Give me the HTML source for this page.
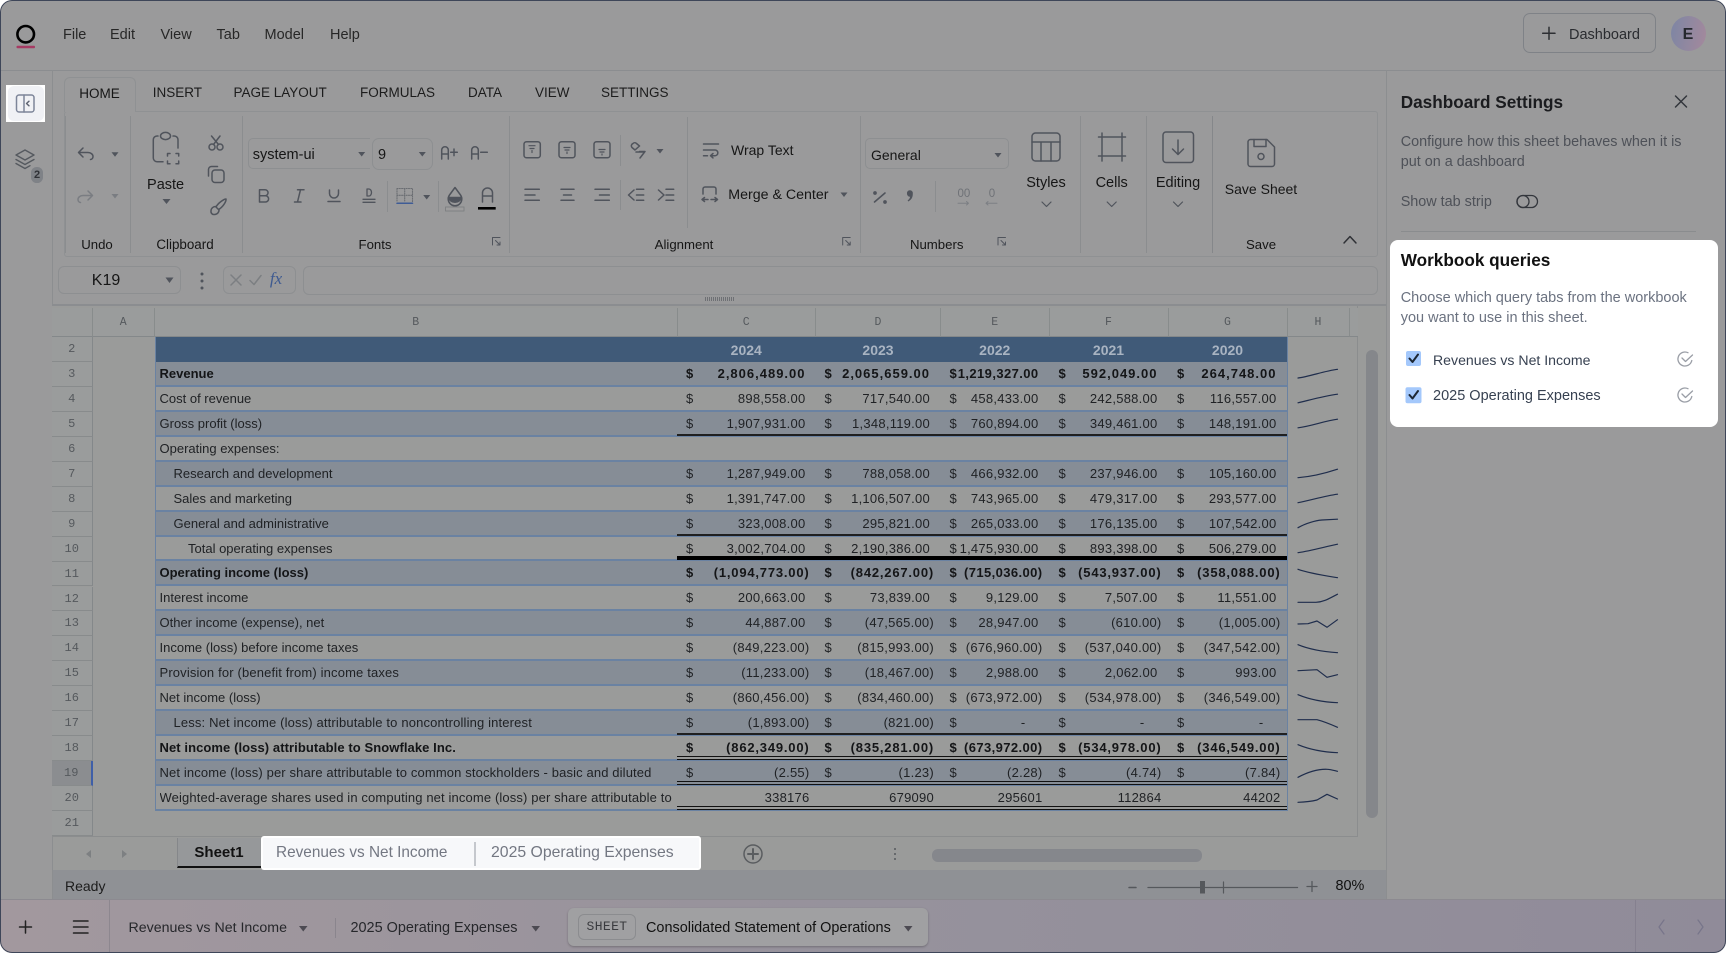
<!DOCTYPE html>
<html><head><meta charset="utf-8"><style>
*{box-sizing:border-box}
html,body{margin:0;padding:0;width:1726px;height:953px;overflow:hidden;background:#fff;font-family:"Liberation Sans",sans-serif}
.app{position:absolute;left:0;top:0;width:1726px;height:953px;border-radius:12px;overflow:hidden;background:#9a9a9b}
.frame{position:absolute;left:0;top:0;width:1726px;height:953px;border:1.5px solid #3e4659;border-radius:12px;pointer-events:none}
.b{position:absolute}
.t{position:absolute;white-space:nowrap;line-height:20px;margin-top:-10px;color:#161616;font-size:14px}
.c{transform:translateX(-50%)}
.tbl{position:absolute;left:155px;top:337px;width:1132.5px;border-left:1.5px solid #6a82a2;border-right:1.5px solid #6a82a2}
.r{position:relative;height:24.95px;border-bottom:2px solid #6a82a2;font-size:13px;color:#1f2124;line-height:24px;white-space:nowrap}
.r.e{background:#868d96}
.r.s{font-weight:bold;color:#141517}
.r i{letter-spacing:.25px}
.r.s i{letter-spacing:.8px}
.r.v i{letter-spacing:1px}
.r.h{background:#405a78;font-weight:bold;font-size:14px;color:#a9b4c2;border-bottom:0;line-height:27px}
.r.h i{letter-spacing:0}
.r span{position:absolute;left:3.5px;top:0;overflow:hidden;width:514px}
.r i{position:absolute;font-style:normal;top:0}
.r .a1{left:530px}.r .a2{left:668.5px}.r .a3{left:793.5px}.r .a4{left:902.5px}.r .a5{left:1021px}
.r .n1{right:481px}.r .n2{right:356.5px}.r .n3{right:248px}.r .n4{right:129px}.r .n5{right:10px}
.r .x{margin-right:-4px}.r .y{margin-right:13px}
.r u{position:absolute;left:521px;right:0;bottom:-1px;text-decoration:none}
.k1{height:2px;background:#202020;bottom:-1px}
.k2{height:4px;background:#000}
.k3{height:4px;border-top:1.5px solid #111;border-bottom:1.5px solid #111}
.rh{position:absolute;left:52px;width:40.5px;height:24.95px;border-bottom:1px solid #888b8c;border-right:1px solid #84888a;background:#9a9c9c;font:12px/25px "Liberation Mono",monospace;color:#55595d;text-align:center}
.ch{position:absolute;top:308px;height:29px;border-right:1px solid #888c8c;border-bottom:1px solid #84888a;background:#9a9c9c;font:11.5px/30px "Liberation Mono",monospace;color:#55595d;text-align:center}
.d{position:absolute;width:1px;background:#8b8d8f}
</style></head><body><div class="app">

<div class="b" style="left:0;top:70px;width:1726px;height:1px;background:#8b8d90"></div>
<div class="b" style="left:52px;top:70px;width:1px;height:830px;background:#8c8e90"></div>
<div class="b" style="left:1386px;top:70px;width:1px;height:830px;background:#8c8e90"></div>

<span class="t" style="left:63px;top:35px;font-size:14.5px;color:#272727">File</span>
<span class="t" style="left:110px;top:35px;font-size:14.5px;color:#272727">Edit</span>
<span class="t" style="left:160.5px;top:35px;font-size:14.5px;color:#272727">View</span>
<span class="t" style="left:216.5px;top:35px;font-size:14.5px;color:#272727">Tab</span>
<span class="t" style="left:264.5px;top:35px;font-size:14.5px;color:#272727">Model</span>
<span class="t" style="left:330px;top:35px;font-size:14.5px;color:#272727">Help</span>

<div class="b" style="left:1523px;top:13px;width:133px;height:40px;border:1px solid #7f8287;border-radius:7px"></div>
<span class="t" style="left:1569px;top:34.5px;font-size:14.5px;color:#2a2c30">Dashboard</span>
<div class="b" style="left:1670.5px;top:15.5px;width:35px;height:35px;border-radius:50%;background:linear-gradient(100deg,#7d86a4,#a4899c)"></div>
<span class="t c" style="left:1688px;top:34.5px;font-size:16px;font-weight:bold;color:#26282f">E</span>

<div class="b" style="left:6px;top:85px;width:39px;height:37px;background:#fff"></div>
<div class="b" style="left:7.5px;top:86px;width:36px;height:35px;background:#f0f1f5;border-radius:6px"></div>
<div class="b" style="left:31.3px;top:166.7px;width:11.4px;height:16px;background:#7f8287;border-radius:5.7px"></div>
<span class="t c" style="left:37px;top:174.5px;font-size:11px;font-weight:bold;color:#303237">2</span>

<div class="b" style="left:63.5px;top:111px;width:1314.5px;height:146px;border:1px solid #8f9193;border-radius:3px;background:#9a9a9b"></div>
<div class="b" style="left:63.5px;top:77px;width:72.5px;height:35px;background:#9a9a9b;border:1px solid #8f9193;border-bottom:0;border-radius:6px 6px 0 0"></div>
<div class="d" style="left:64.5px;top:116px;height:137px"></div>
<div class="d" style="left:130px;top:116px;height:137px"></div>
<div class="d" style="left:241.5px;top:116px;height:137px"></div>
<div class="d" style="left:509px;top:116px;height:137px"></div>
<div class="d" style="left:686.7px;top:117px;height:111px"></div>
<div class="d" style="left:859.5px;top:116px;height:137px"></div>
<div class="d" style="left:1079.5px;top:116px;height:137px"></div>
<div class="d" style="left:1145.6px;top:116px;height:137px"></div>
<div class="d" style="left:1211.5px;top:116px;height:137px;width:1.5px;background:#85878a"></div>
<div class="d" style="left:387.3px;top:181px;height:31px"></div>
<div class="d" style="left:438.3px;top:181px;height:31px"></div>
<div class="d" style="left:620.3px;top:135px;height:31px"></div>
<div class="d" style="left:620.3px;top:180px;height:30px"></div>
<div class="d" style="left:935px;top:181px;height:31px"></div>

<span class="t c" style="left:99.5px;top:94px;font-size:13.5px">HOME</span>
<span class="t" style="left:152.7px;top:93px;font-size:13.5px;color:#1c1c1c">INSERT</span>
<span class="t" style="left:233.5px;top:93px;font-size:13.5px;color:#1c1c1c">PAGE LAYOUT</span>
<span class="t" style="left:360px;top:93px;font-size:13.5px;color:#1c1c1c">FORMULAS</span>
<span class="t" style="left:468px;top:93px;font-size:13.5px;color:#1c1c1c">DATA</span>
<span class="t" style="left:535px;top:93px;font-size:13.5px;color:#1c1c1c">VIEW</span>
<span class="t" style="left:601px;top:93px;font-size:13.5px;color:#1c1c1c">SETTINGS</span>

<span class="t c" style="left:97px;top:245px;font-size:13.2px">Undo</span>
<span class="t c" style="left:185px;top:245px;font-size:13.4px">Clipboard</span>
<span class="t c" style="left:375px;top:245px;font-size:13.2px">Fonts</span>
<span class="t c" style="left:684px;top:245px;font-size:13.2px">Alignment</span>
<span class="t c" style="left:936.7px;top:245px;font-size:13.2px">Numbers</span>
<span class="t c" style="left:1261px;top:245px;font-size:13.2px">Save</span>

<span class="t c" style="left:165.6px;top:184.5px;font-size:14.5px">Paste</span>

<div class="b" style="left:248px;top:138px;width:122px;height:31px;border:1px solid #8d8f91;border-right:0;border-radius:5px 0 0 5px"></div>
<div class="b" style="left:371.5px;top:137.5px;width:61.5px;height:32px;border:1px solid #8d8f91;border-radius:7px"></div>
<span class="t" style="left:252.7px;top:155px;font-size:14.5px">system-ui</span>
<span class="t" style="left:378px;top:155px;font-size:14.5px">9</span>
<span class="t" style="left:731px;top:150px">Wrap Text</span>
<span class="t" style="left:728.3px;top:194.5px;font-size:14.2px">Merge &amp; Center</span>
<div class="b" style="left:865px;top:138px;width:144px;height:31px;border:1px solid #8d8f91;border-radius:5px"></div>
<span class="t" style="left:871px;top:155px">General</span>
<span class="t" style="left:957.5px;top:194px;font-size:11.5px;color:#6f7277">00</span>
<span class="t" style="left:988.7px;top:194px;font-size:11.5px;color:#6f7277">0</span>
<span class="t c" style="left:1046px;top:183px;font-size:14.5px">Styles</span>
<span class="t c" style="left:1111.7px;top:183px;font-size:14.5px">Cells</span>
<span class="t c" style="left:1178px;top:183px;font-size:14.5px">Editing</span>
<span class="t c" style="left:1261px;top:188.5px;font-size:14px">Save Sheet</span>

<div class="b" style="left:58px;top:266px;width:123px;height:28px;border:1px solid #8d8f91;border-radius:6px"></div>
<span class="t c" style="left:106px;top:281px;font-size:16px">K19</span>
<div class="b" style="left:223px;top:266px;width:73px;height:28px;border:1px solid #8d8f91;border-radius:6px"></div>
<span class="t c" style="left:276px;top:279px;font:italic 17px/20px 'Liberation Serif',serif;color:#3e5a90">fx</span>
<div class="b" style="left:303px;top:266px;width:1075px;height:29px;border:1px solid #8d8f91;border-radius:6px"></div>
<div class="b" style="left:52px;top:304px;width:1334px;height:2px;background:#8b8d90"></div>

<div class="b" style="left:52px;top:306px;width:1306px;height:531px;background:#9a9b9a;border-right:1px solid #8b8d8e;border-bottom:1px solid #8b8d8e"></div>
<div class="ch" style="left:52px;width:40.5px"></div>
<div class="ch" style="left:92.5px;width:62.5px">A</div>
<div class="ch" style="left:155px;width:522.5px">B</div>
<div class="ch" style="left:677.5px;width:138.5px">C</div>
<div class="ch" style="left:816px;width:125px">D</div>
<div class="ch" style="left:941px;width:108.5px">E</div>
<div class="ch" style="left:1049.5px;width:119px">F</div>
<div class="ch" style="left:1168.5px;width:119px">G</div>
<div class="ch" style="left:1287.5px;width:62px">H</div>
<div class="ch" style="left:1349.5px;width:8px;border-right:0"></div>

<div class="rh" style="top:337px">2</div>
<div class="rh" style="top:361.95px">3</div>
<div class="rh" style="top:386.9px">4</div>
<div class="rh" style="top:411.85px">5</div>
<div class="rh" style="top:436.8px">6</div>
<div class="rh" style="top:461.75px">7</div>
<div class="rh" style="top:486.7px">8</div>
<div class="rh" style="top:511.65px">9</div>
<div class="rh" style="top:536.6px">10</div>
<div class="rh" style="top:561.55px">11</div>
<div class="rh" style="top:586.5px">12</div>
<div class="rh" style="top:611.45px">13</div>
<div class="rh" style="top:636.4px">14</div>
<div class="rh" style="top:661.35px">15</div>
<div class="rh" style="top:686.3px">16</div>
<div class="rh" style="top:711.25px">17</div>
<div class="rh" style="top:736.2px">18</div>
<div class="rh" style="top:761.15px;background:#8b8d90;border-right:2px solid #3f5fa8">19</div>
<div class="rh" style="top:786.1px">20</div>
<div class="rh" style="top:811.05px">21</div>

<div class="tbl">
<div class="r h"><i style="left:521px;width:138.5px;text-align:center">2024</i><i style="left:659.5px;width:125px;text-align:center">2023</i><i style="left:784.5px;width:108.5px;text-align:center">2022</i><i style="left:893px;width:119px;text-align:center">2021</i><i style="left:1012px;width:119px;text-align:center">2020</i></div>
<div class="r e s v"><span>Revenue</span><i class="a1">$</i><i class="n1">2,806,489.00</i><i class="a2">$</i><i class="n2">2,065,659.00</i><i class="a3">$</i><i class="n3" style="letter-spacing:.4px">1,219,327.00</i><i class="a4">$</i><i class="n4">592,049.00</i><i class="a5">$</i><i class="n5">264,748.00</i></div>
<div class="r"><span>Cost of revenue</span><i class="a1">$</i><i class="n1">898,558.00</i><i class="a2">$</i><i class="n2">717,540.00</i><i class="a3">$</i><i class="n3">458,433.00</i><i class="a4">$</i><i class="n4">242,588.00</i><i class="a5">$</i><i class="n5">116,557.00</i></div>
<div class="r e"><span>Gross profit (loss)</span><i class="a1">$</i><i class="n1">1,907,931.00</i><i class="a2">$</i><i class="n2">1,348,119.00</i><i class="a3">$</i><i class="n3">760,894.00</i><i class="a4">$</i><i class="n4">349,461.00</i><i class="a5">$</i><i class="n5">148,191.00</i><u class="k1"></u></div>
<div class="r"><span>Operating expenses:</span></div>
<div class="r e"><span style="left:17.5px">Research and development</span><i class="a1">$</i><i class="n1">1,287,949.00</i><i class="a2">$</i><i class="n2">788,058.00</i><i class="a3">$</i><i class="n3">466,932.00</i><i class="a4">$</i><i class="n4">237,946.00</i><i class="a5">$</i><i class="n5">105,160.00</i></div>
<div class="r"><span style="left:17.5px">Sales and marketing</span><i class="a1">$</i><i class="n1">1,391,747.00</i><i class="a2">$</i><i class="n2">1,106,507.00</i><i class="a3">$</i><i class="n3">743,965.00</i><i class="a4">$</i><i class="n4">479,317.00</i><i class="a5">$</i><i class="n5">293,577.00</i></div>
<div class="r e"><span style="left:17.5px">General and administrative</span><i class="a1">$</i><i class="n1">323,008.00</i><i class="a2">$</i><i class="n2">295,821.00</i><i class="a3">$</i><i class="n3">265,033.00</i><i class="a4">$</i><i class="n4">176,135.00</i><i class="a5">$</i><i class="n5">107,542.00</i><u class="k1"></u></div>
<div class="r"><span style="left:32px">Total operating expenses</span><i class="a1">$</i><i class="n1">3,002,704.00</i><i class="a2">$</i><i class="n2">2,190,386.00</i><i class="a3">$</i><i class="n3">1,475,930.00</i><i class="a4">$</i><i class="n4">893,398.00</i><i class="a5">$</i><i class="n5">506,279.00</i><u class="k2"></u></div>
<div class="r e s"><span>Operating income (loss)</span><i class="a1">$</i><i class="n1 x">(1,094,773.00)</i><i class="a2">$</i><i class="n2 x">(842,267.00)</i><i class="a3">$</i><i class="n3 x" style="letter-spacing:.4px">(715,036.00)</i><i class="a4">$</i><i class="n4 x">(543,937.00)</i><i class="a5">$</i><i class="n5 x">(358,088.00)</i></div>
<div class="r"><span>Interest income</span><i class="a1">$</i><i class="n1">200,663.00</i><i class="a2">$</i><i class="n2">73,839.00</i><i class="a3">$</i><i class="n3">9,129.00</i><i class="a4">$</i><i class="n4">7,507.00</i><i class="a5">$</i><i class="n5">11,551.00</i></div>
<div class="r e"><span>Other income (expense), net</span><i class="a1">$</i><i class="n1">44,887.00</i><i class="a2">$</i><i class="n2 x">(47,565.00)</i><i class="a3">$</i><i class="n3">28,947.00</i><i class="a4">$</i><i class="n4 x">(610.00)</i><i class="a5">$</i><i class="n5 x">(1,005.00)</i></div>
<div class="r"><span>Income (loss) before income taxes</span><i class="a1">$</i><i class="n1 x">(849,223.00)</i><i class="a2">$</i><i class="n2 x">(815,993.00)</i><i class="a3">$</i><i class="n3 x">(676,960.00)</i><i class="a4">$</i><i class="n4 x">(537,040.00)</i><i class="a5">$</i><i class="n5 x">(347,542.00)</i></div>
<div class="r e"><span style="letter-spacing:.15px">Provision for (benefit from) income taxes</span><i class="a1">$</i><i class="n1 x">(11,233.00)</i><i class="a2">$</i><i class="n2 x">(18,467.00)</i><i class="a3">$</i><i class="n3">2,988.00</i><i class="a4">$</i><i class="n4">2,062.00</i><i class="a5">$</i><i class="n5">993.00</i></div>
<div class="r"><span>Net income (loss)</span><i class="a1">$</i><i class="n1 x">(860,456.00)</i><i class="a2">$</i><i class="n2 x">(834,460.00)</i><i class="a3">$</i><i class="n3 x">(673,972.00)</i><i class="a4">$</i><i class="n4 x">(534,978.00)</i><i class="a5">$</i><i class="n5 x">(346,549.00)</i></div>
<div class="r e"><span style="left:17.5px;letter-spacing:.15px">Less: Net income (loss) attributable to noncontrolling interest</span><i class="a1">$</i><i class="n1 x">(1,893.00)</i><i class="a2">$</i><i class="n2 x">(821.00)</i><i class="a3">$</i><i class="n3 y">-</i><i class="a4">$</i><i class="n4 y">-</i><i class="a5">$</i><i class="n5 y">-</i><u class="k1"></u></div>
<div class="r s"><span style="letter-spacing:.08px">Net income (loss) attributable to Snowflake Inc.</span><i class="a1">$</i><i class="n1 x">(862,349.00)</i><i class="a2">$</i><i class="n2 x">(835,281.00)</i><i class="a3">$</i><i class="n3 x" style="letter-spacing:.4px">(673,972.00)</i><i class="a4">$</i><i class="n4 x">(534,978.00)</i><i class="a5">$</i><i class="n5 x">(346,549.00)</i><u class="k3"></u></div>
<div class="r e"><span style="letter-spacing:.13px">Net income (loss) per share attributable to common stockholders - basic and diluted</span><i class="a1">$</i><i class="n1 x">(2.55)</i><i class="a2">$</i><i class="n2 x">(1.23)</i><i class="a3">$</i><i class="n3 x">(2.28)</i><i class="a4">$</i><i class="n4 x">(4.74)</i><i class="a5">$</i><i class="n5 x">(7.84)</i><u class="k3"></u></div>
<div class="r"><span style="letter-spacing:.13px">Weighted-average shares used in computing net income (loss) per share attributable to common stockholders</span><i class="n1 x">338176</i><i class="n2 x">679090</i><i class="n3 x">295601</i><i class="n4 x">112864</i><i class="n5 x">44202</i><u class="k3"></u></div>
</div>

<div class="b" style="left:53px;top:837px;width:1333px;height:33px;background:#9a9b9a"></div>
<div class="b" style="left:1358px;top:306px;width:28px;height:531px;background:#9a9b9a"></div>
<div class="b" style="left:1366px;top:350px;width:12px;height:468px;border-radius:6px;background:#85878b"></div>
<div class="b" style="left:177px;top:838px;width:84px;height:30px;background:#96989a;border-left:1px solid #85878a;border-bottom:2px solid #111"></div>
<span class="t c" style="left:219px;top:852.5px;font-size:15px;font-weight:bold;color:#111">Sheet1</span>
<div class="b" style="left:261px;top:836px;width:440px;height:34px;background:#fff;border-radius:3px"></div>
<div class="b" style="left:263px;top:838px;width:436px;height:30px;background:#f7f8fa"></div>
<div class="b" style="left:474px;top:842px;width:1.5px;height:24px;background:#c5c8cd"></div>
<span class="t" style="left:276px;top:852.5px;font-size:15.35px;color:#737782">Revenues vs Net Income</span>
<span class="t" style="left:491px;top:852.5px;font-size:15.8px;color:#737782">2025 Operating Expenses</span>
<div class="b" style="left:932px;top:849px;width:270px;height:12.5px;border-radius:6px;background:#85878c"></div>

<div class="b" style="left:53px;top:870px;width:1333px;height:29px;background:#8f9195"></div>
<span class="t" style="left:65px;top:886px;font-size:14px;color:#1c1c1c">Ready</span>
<span class="t" style="left:1335.5px;top:886px;font-size:14.4px;color:#111">80%</span>

<div class="b" style="left:0;top:899px;width:1726px;height:54px;background:linear-gradient(90deg,#a2989e,#96929c 50%,#908b99);border-top:1px solid #8c8a90"></div>
<div class="b" style="left:109px;top:900px;width:1px;height:53px;background:#8d878f"></div>
<span class="t" style="left:128.5px;top:928px;font-size:14.2px;color:#26272b">Revenues vs Net Income</span>
<span class="t" style="left:350.5px;top:928px;font-size:14.45px;color:#26272b">2025 Operating Expenses</span>
<div class="b" style="left:334.5px;top:918px;width:1px;height:20px;background:#8a858d"></div>
<div class="b" style="left:567.5px;top:908px;width:360px;height:38px;background:#a0a0a2;border-radius:6px;box-shadow:0 1px 2px rgba(0,0,0,.25)"></div>
<div class="b" style="left:578px;top:914px;width:58px;height:26px;border:1px solid #8b8c8f;border-radius:6px"></div>
<span class="t c" style="left:607px;top:927px;font:13px/20px 'Liberation Mono',monospace;letter-spacing:.4px;color:#3a3b3f">SHEET</span>
<span class="t" style="left:646px;top:928px;font-size:14.45px;color:#111">Consolidated Statement of Operations</span>
<div class="b" style="left:1635px;top:900px;width:1px;height:53px;background:#85808f"></div>

<span class="t" style="left:1400.7px;top:101.5px;font-size:17.2px;font-weight:bold;color:#1b1c1f">Dashboard Settings</span>
<span class="t" style="left:1400.7px;top:141.7px;font-size:14.4px;color:#4e5158">Configure how this sheet behaves when it is</span>
<span class="t" style="left:1400.7px;top:161.7px;font-size:14.4px;color:#4e5158">put on a dashboard</span>
<span class="t" style="left:1400.7px;top:202px;font-size:14.4px;color:#4e5158">Show tab strip</span>
<div class="b" style="left:1400.7px;top:231px;width:295px;height:1px;background:#8a8c8e"></div>

<div class="b" style="left:1390px;top:240px;width:328px;height:186.7px;background:#fff;border-radius:8px"></div>
<span class="t" style="left:1400.7px;top:260px;font-size:17.2px;font-weight:bold;color:#111">Workbook queries</span>
<span class="t" style="left:1400.7px;top:297.7px;font-size:14.5px;color:#6b7280">Choose which query tabs from the workbook</span>
<span class="t" style="left:1400.7px;top:317.7px;font-size:14.5px;color:#6b7280">you want to use in this sheet.</span>
<span class="t" style="left:1433px;top:360.3px;font-size:14.1px;color:#374151">Revenues vs Net Income</span>
<span class="t" style="left:1433px;top:396.3px;font-size:14.5px;color:#374151">2025 Operating Expenses</span>

<svg class="b" style="left:0;top:0" width="1726" height="953" viewBox="0 0 1726 953" fill="none" stroke-linecap="round" stroke-linejoin="round">
<ellipse cx="25.7" cy="34.2" rx="8.3" ry="8.2" stroke="#000" stroke-width="2.6"/>
<rect x="16.5" y="45.7" width="18.5" height="2.6" rx="1" fill="#a63a63"/>
<path d="M1542.7 33.3H1555M1549 27.3V39.3" stroke="#2d2f33" stroke-width="1.5"/>

<g stroke="#7d8599" stroke-width="1.5"><rect x="16.5" y="95" width="17.5" height="17" rx="2.5"/><path d="M24 95V112"/></g>
<path d="M29 101.2L26.5 103.5L29 105.8" stroke="#5e6372" stroke-width="1.4"/>
<g stroke="#55595f" stroke-width="1.4"><path d="M25 150L34 155L25 160L16 155Z"/><path d="M16 159.5L25 164.5L34 159.5"/><path d="M16 163.5L25 168.5L30 165.7"/></g>

<g stroke="#50545c" stroke-width="1.5">
<path d="M83 148L78.5 152.5L83 157M79 152.5H88C91 152.5 93 154.5 93 156.5C93 158 92 159.5 90.5 159.5"/>
<path d="M158 136H157a3.7 3.7 0 0 0-3.7 3.7V158a3.7 3.7 0 0 0 3.7 3.7H163M173 136h1.3a3.7 3.7 0 0 1 3.7 3.7V148"/>
<ellipse cx="165.5" cy="136" rx="5" ry="3.6"/>
<path d="M167.5 156V153.5H170M176 153.5H178.7V156M178.7 161V163.7H176M170 163.7H167.5V161"/>
<circle cx="212" cy="147" r="3"/><circle cx="220" cy="147" r="3"/>
<path d="M213.5 144.5L220 136M218.500 144.500L211.500 136"/>
<rect x="212" y="170" width="12" height="12.5" rx="3"/>
<path d="M208.500 176V169.500a3 3 0 0 1 3-3h6"/>
<path d="M226 199C224 199 218 203 216 207L218.500 209.500C222.500 207.500 226.500 201.500 226 199Z"/>
<path d="M216 206.500a4.500 4.500 0 0 0-5 4.500a3 3 0 0 0 3.500 3.500a4.500 4.500 0 0 0 4.500-5"/>
<path d="M441.700 159V150a3.300 3.300 0 0 1 6.600 0V159M441.700 154H448.300M450.700 152.300H457.300M454 149V155.600"/>
<path d="M471.700 159V150a3.300 3.300 0 0 1 6.600 0V159M471.700 154H478.300M480.700 152.300H487.300"/>
<path d="M259.500 189.700V202M259.500 189.700H265a3 3 0 0 1 0 6.100H259.500M259.500 195.800H265.500a3.100 3.100 0 0 1 0 6.200H259.500"/>
<path d="M297.500 189.700H304M294.500 202H301M300.500 189.700L297.500 202"/>
<path d="M329.500 190V193.500a4.500 4.500 0 0 0 9 0V190M328 201.500H340"/>
<path d="M367 189V196H369a2.500 3.500 0 0 0 0-7ZM363 199.300H375M363 202.300H375" stroke-width="1.300"/>
<path d="M397 188.500H412.500V202M397 188.500V202M404.700 188.500V202M397 195.300H412.500" stroke="#6a6d72" stroke-width="1.100" stroke-dasharray="1 1.300"/>
<path d="M397 203.200H412.500" stroke="#3f5c96"/>
<path d="M455 187.500L460.500 195a6.800 6.800 0 1 1-11 0Z"/>
<path d="M448.500 197.500H461.500a6.800 6.800 0 0 1-13 0Z" fill="#4f535c"/>
<rect x="445.500" y="207" width="18.500" height="4" fill="#9c9c9c" stroke="#7f8183" stroke-width="1"/>
<path d="M482.500 202V193a5 5 0 0 1 10 0V202M482.500 196H492.500"/>
<rect x="524" y="141.700" width="16.300" height="16" rx="2.500"/><rect x="559" y="141.700" width="16" height="16" rx="2.500"/><rect x="594" y="141.700" width="16" height="16" rx="2.500"/>
<path d="M529 145.700H535M530 148.500H534M532 150.500V152.500" stroke-width="1.200"/>
<path d="M564 147.500H570M565 150H569M567 152V153.500" stroke-width="1.200"/>
<path d="M599 149.500H605M600 152H604M602 154V155" stroke-width="1.200"/>
<path d="M633 143.500a2.500 2.500 0 0 1 3.500 0l3 2.500l-4.500 4l-3-2.500a2.500 2.500 0 0 1 1-4Z"/>
<path d="M636 152L644.500 152M640 158L645 151.500M639.500 151.500H645" />
<path d="M525 189.300H539.300M525 195H535M525 200.300H539.300M561 189.300H574M563.500 195H571.500M561 200.300H574M595 189.300H609.300M599.500 195H609.300M595 200.300H609.300"/>
<path d="M634 190L628.500 195L634 200M636.500 189.300H643.700M636.500 195H643.700M636.500 200.300H643.700M658.500 190L664 195L658.500 200M666 189.300H673.700M666 195H673.700M666 200.300H673.700"/>
<path d="M703.500 144H718.500M703.500 150H715a2.800 2.800 0 0 1 0 5.700H710.500M713 153.500L710.500 155.700L713 157.900M703.500 155.700H707.500"/>
<path d="M703 194V189a2 2 0 0 1 2-2H714a2 2 0 0 1 2 2V194M702 199.500H708M702 199.500L704.500 197.500M702 199.500L704.500 201.500M711 199.500H717.500M717.500 199.500L715 197.500M717.500 199.500L715 201.500"/>
<path d="M874.500 202L885 193" stroke-width="1.600"/>
<circle cx="875" cy="193" r="1.100" fill="#50545c"/><circle cx="885" cy="202" r="1.100" fill="#50545c"/>
<path d="M958 203.300H968.500M966.500 201.500L968.500 203.300L966.500 205" stroke="#7c7f84" stroke-width="1"/>
<path d="M997 203.300H986M988 201.500L986 203.300L988 205" stroke="#7c7f84" stroke-width="1"/>
<rect x="1032" y="133" width="28" height="28" rx="3.500"/><path d="M1032 142H1060M1041 142V161M1051 142V161"/>
<path d="M1098.500 137H1125.500M1098.500 156H1125.500M1102 133V161M1122 133V161"/>
<rect x="1163" y="132" width="30.500" height="30.500" rx="3"/><path d="M1178 140V154M1172.500 149L1178 154.500L1183.500 149"/>
<path d="M1250.500 139.500H1267L1274.500 147V164a2.500 2.500 0 0 1-2.500 2.500H1250.500a2.500 2.500 0 0 1-2.500-2.500V142a2.500 2.500 0 0 1 2.500-2.500Z"/>
<path d="M1254 139.500V146.500H1266V139.500"/><circle cx="1261" cy="156.500" r="3"/>
<path d="M1042 202L1046.500 206.500L1051 202M1107.200 202L1111.700 206.500L1116.200 202M1173.500 202L1178 206.500L1182.500 202" stroke-width="1.200"/>
<path d="M1344 243L1350 236.500L1356 243" stroke="#2f3136"/>
</g>
<path d="M88 191L92.500 195.500L88 200M92 195.500H83C80 195.500 78 197.500 78 199.500C78 201 79 202.500 80.500 202.500" stroke="#7a7d82" stroke-width="1.500"/>
<rect x="478" y="207" width="17.700" height="2.600" fill="#000"/>
<g fill="#50545c">
<path d="M111.500 152.300h7l-3.500 4.500zM162.500 199h8l-4 5zM358.200 152h7l-3.500 4.500zM418.800 152h7l-3.500 4.500zM423.200 195h7l-3.500 4.500zM656.500 149h7l-3.500 4.500zM840.500 192.500h7l-3.500 4.500zM994.500 153h7l-3.500 4.500zM165.500 277.500h8l-4 5.500z"/>
<path d="M907 194a3 3 0 1 1 5.800 0c0 4-2 6-4.500 7.500l-.7-1c1.500-1 2.300-2.300 2.500-3.700a3 3 0 0 1-3.100-2.800Z"/>
<circle cx="202" cy="274" r="1.500"/><circle cx="202" cy="281" r="1.500"/><circle cx="202" cy="288" r="1.500"/>
</g>
<path d="M111.500 194h7l-3.500 4.500z" fill="#7a7d82"/>
<g stroke="#50545c" stroke-width="1"><path d="M492.500 245V237.500H500M495.500 240.500L500 245M500 242V245H497M842.700 245V237.500H850.200M845.700 240.500L850.200 245M850.200 242V245H847.200M998 245V237.500H1005.500M1001 240.500L1005.500 245M1005.500 242V245H1002.500"/></g>
<path d="M231 275L241 285M241 275L231 285M250 280.500L254 284.500L261 275.500" stroke="#7c7f82" stroke-width="1.500"/>
<path d="M705 298H734M705 300H734" stroke="#55585c" stroke-width="1.200" stroke-dasharray="1 1" stroke-linecap="butt"/>

<g stroke="#1f2d4c" stroke-width="1.200">
<path d="M1298 378C1310 376.500 1324 371 1337.500 369.300"/>
<path d="M1298 402.800C1310 400 1324 396 1337.500 394.200"/>
<path d="M1298 427.800C1312 426 1324 421 1337.500 419.200"/>
<path d="M1298 477.700C1314 476.500 1326 473 1337.500 469.200"/>
<path d="M1298 502.700C1312 500 1324 496 1337.500 494.200"/>
<path d="M1298 527.700C1306 523 1316 520.500 1322 520L1337.500 519.200"/>
<path d="M1298 552.700C1312 550.500 1324 547 1337.500 544.200"/>
<path d="M1298 569.300C1310 573.500 1324 575.500 1337.500 577.700"/>
<path d="M1298 602.300L1316 602.300C1324 602 1330 598 1337.500 594.200"/>
<path d="M1298 624L1308 623.700L1317 621L1327 627.300L1337.500 619.700"/>
<path d="M1298 644.700C1306 648 1320 651.500 1337.500 652.700"/>
<path d="M1298 670.700L1317 669.700L1327 677.300L1337.500 674.700"/>
<path d="M1298 694.700C1306 698 1320 702 1337.500 702.700"/>
<path d="M1298 719.700H1317C1324 721.500 1330 724 1337.500 727.300"/>
<path d="M1298 744.700C1306 748 1320 752 1337.500 752.700"/>
<path d="M1298 777.300C1308 772 1318 769 1327 769.300C1331 769.500 1334 770.500 1337.500 771.300"/>
<path d="M1298 802.300C1306 802 1313 801 1317 800L1327 794.300L1337.500 799"/>
</g>

<path d="M91 850v8l-5-4zM122 850v8l5-4z" fill="#7d8082"/>
<circle cx="753" cy="854" r="9" stroke="#5a5d60" stroke-width="1.500"/>
<path d="M748 854H758M753 849V859" stroke="#5a5d60" stroke-width="2"/>
<path d="M895 848V860" stroke="#66696c" stroke-width="2" stroke-dasharray="2 3" stroke-linecap="butt"/>

<path d="M1129 887.500H1136" stroke="#55585c" stroke-width="1.500"/>
<path d="M1148 887.500H1297.500" stroke="#55585c" stroke-width="1.300"/>
<rect x="1200" y="881" width="5" height="12.500" fill="#55585c"/>
<path d="M1223.500 882V893" stroke="#55585c" stroke-width="1.200"/>
<path d="M1307 886.500H1317M1312 881.500V891.500" stroke="#55585c" stroke-width="1.300"/>

<path d="M19.500 927H31.500M25.500 921V933" stroke="#222" stroke-width="1.500"/>
<path d="M73.500 921H88M73.500 927H88M73.500 933H88" stroke="#222" stroke-width="1.500"/>
<path d="M299 926h8.500l-4.250 5.500zM531.500 926h8.500l-4.250 5.500zM904 926h8.500l-4.250 5.500z" fill="#4c4a52"/>
<path d="M1664 920L1659 927L1664 934M1698 920L1703 927L1698 934" stroke="#77758a" stroke-width="1.300"/>

<path d="M1675.500 96L1686.500 107M1686.500 96L1675.500 107" stroke="#33363c" stroke-width="1.500"/>
<rect x="1517" y="195.500" width="20.500" height="12" rx="6" stroke="#33363c" stroke-width="1.300"/>
<circle cx="1523" cy="201.500" r="6" stroke="#33363c" stroke-width="1.300"/>

<rect x="1406" y="351" width="15" height="15" rx="2" fill="#a4c8fb"/>
<rect x="1405.500" y="387.300" width="16" height="16" rx="2" fill="#a4c8fb"/>
<path d="M1409.500 358.500L1412.500 362L1418 354.500M1409.500 395L1412.500 398.500L1418 391" stroke="#1d2733" stroke-width="2"/>
<path d="M1688 352.700A7 7 0 1 0 1691.800 360.500M1682 358L1685.500 361.500L1692.500 355" stroke="#9a9ea6" stroke-width="1.300"/>
<path d="M1688 388.700A7 7 0 1 0 1691.800 396.500M1682 394L1685.500 397.500L1692.500 391" stroke="#9a9ea6" stroke-width="1.300"/>
</svg>
<div class="frame"></div>
</div></body></html>
